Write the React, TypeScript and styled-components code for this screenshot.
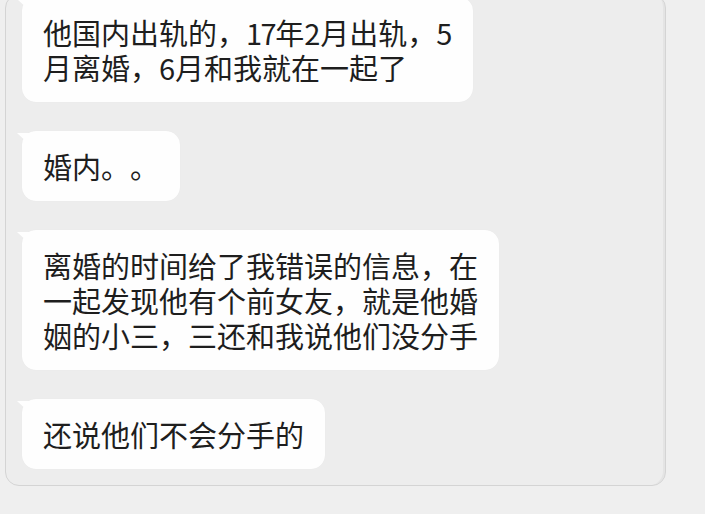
import React from "react";
import styled, { createGlobalStyle } from "styled-components";

const GlobalStyle = createGlobalStyle`
  html, body {
    margin: 0;
    padding: 0;
    background: #efefef;
    overflow: hidden;
  }
  body {
    width: 705px;
    height: 514px;
    font-family: "Noto Sans CJK SC", "Noto Sans", sans-serif;
  }
`;

const Page = styled.div`
  width: 705px;
  height: 514px;
  overflow: hidden;
  background: #efefef;
`;

const Panel = styled.div`
  box-sizing: border-box;
  margin: -6px 0 0 5px;
  width: 661px;
  height: 492px;
  padding: 2px 16px 0 16px;
  background: #ededed;
  border: 1px solid #d4d4d4;
  border-radius: 14px;
  box-shadow: inset -4px -1px 0 -2px #e4e4e4;
  display: flex;
  flex-direction: column;
  align-items: flex-start;
  gap: 29px;
`;

const Bubble = styled.div`
  position: relative;
  box-sizing: border-box;
  background: #fefefe;
  border-radius: 14px;
  padding: 17.5px 21px;
  font-size: 29px;
  line-height: 35px;
  color: #1e1e1e;
  white-space: nowrap;
  text-spacing-trim: space-all;
  box-shadow: 0 0 1px rgba(0, 0, 0, 0.06);

  &::before {
    content: "";
    position: absolute;
    left: -5px;
    top: 2px;
    width: 12px;
    height: 11px;
    background: #fefefe;
    clip-path: polygon(0 0, 100% 0, 100% 100%);
  }
`;

const Num = styled.span`
  letter-spacing: -1.5px;
`;

export default function App() {
  return (
    <Page>
      <GlobalStyle />
      <Panel>
        <Bubble>
          他国内出轨的，<Num>17</Num>年2月出轨，5
          <br />
          月离婚，6月和我就在一起了
        </Bubble>
        <Bubble>婚内。。</Bubble>
        <Bubble>
          离婚的时间给了我错误的信息，在
          <br />
          一起发现他有个前女友，就是他婚
          <br />
          姻的小三，三还和我说他们没分手
        </Bubble>
        <Bubble>还说他们不会分手的</Bubble>
      </Panel>
    </Page>
  );
}
